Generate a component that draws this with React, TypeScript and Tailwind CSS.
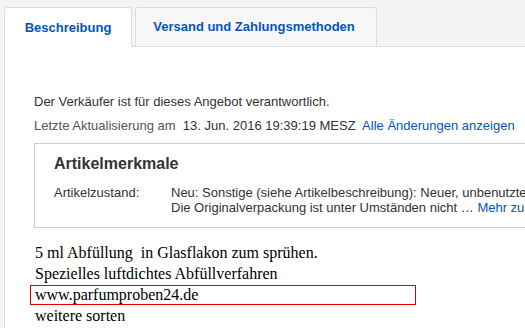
export default function App() {
  return (
    <div className="h-[328px] w-[525px] overflow-hidden bg-[#f4f4f4] pl-[4px] pt-[7px] font-['Liberation_Sans',Arial,sans-serif]">
      <div className="flex w-[600px] border-b border-[#dddddd]">
        <div className="-mb-px flex h-[40px] w-[128px] items-center justify-center rounded-t-[3px] border border-b-0 border-[#dddddd] bg-white text-[13px] font-bold text-[#0654ba]">
          Beschreibung
        </div>
        <div className="ml-[3px] flex h-[39px] w-[242px] items-center justify-center rounded-t-[3px] border border-b-0 border-[#dddddd] bg-[#f7f7f7] pr-[4px] text-[13px] font-bold text-[#0654ba]">
          Versand und Zahlungsmethoden
        </div>
      </div>
      <div className="h-[300px] w-[600px] border-l border-[#dddddd] bg-white pl-[29px] pt-[47px]">
        <p className="text-[13px] leading-[16px] text-[#333333]">
          Der Verkäufer ist für dieses Angebot verantwortlich.
        </p>
        <p className="mt-[8px] whitespace-pre text-[13px] leading-[16px] text-[#555555]">
          {'Letzte Aktualisierung am  '}
          <span className="text-[#333333]">13. Jun. 2016 19:39:19 MESZ</span>
          {'  '}
          <span className="text-[#0654ba]">Alle Änderungen anzeigen</span>
        </p>
        <div className="mt-[9px] h-[85px] w-[560px] border border-[#cccccc] px-[19px] pt-[11px]">
          <h2 className="text-[16px] font-bold leading-[18px] text-[#333333]">Artikelmerkmale</h2>
          <div className="mt-[12px] flex text-[13px] leading-[15px] text-[#333333]">
            <div className="w-[117px] shrink-0">Artikelzustand:</div>
            <div className="whitespace-nowrap">
              <div>Neu: Sonstige (siehe Artikelbeschreibung): Neuer, unbenutzter Artikel</div>
              <div>
                Die Originalverpackung ist unter Umständen nicht …{' '}
                <span className="text-[#0654ba]">Mehr zum Zustand</span>
              </div>
            </div>
          </div>
        </div>
        <div className="mt-[14px] font-['Liberation_Serif','Times_New_Roman',serif] text-[16px] leading-[21px] text-black">
          <div className="whitespace-pre pl-[1px]">5 ml Abfüllung  in Glasflakon zum sprühen.</div>
          <div className="pl-[1px]">Spezielles luftdichtes Abfüllverfahren</div>
          <div className="-ml-[4px] mt-[1px] w-[386px] border border-[#e00000] pl-[4px] leading-[18px]">www.parfumproben24.de</div>
          <div className="pl-[1px]">weitere sorten</div>
        </div>
      </div>
    </div>
  );
}
